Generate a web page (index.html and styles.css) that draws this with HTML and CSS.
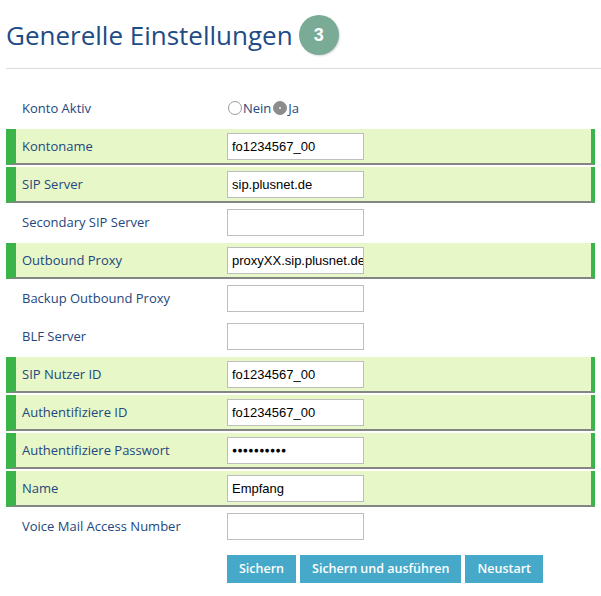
FILE: index.html
```html
<!DOCTYPE html>
<html>
<head>
<meta charset="utf-8">
<link rel="stylesheet" href="styles.css">
</head>
<body>
<div class="page">
  <h1 class="title">Generelle Einstellungen <span class="badge">3</span></h1>
  <div class="rule"></div>
  <div class="form">
    <div class="row">
      <div class="label">Konto Aktiv</div>
      <div class="field radios">
        <span class="radio"></span><span class="rtext">Nein</span>
        <span class="radio on"></span><span class="rtext">Ja</span>
      </div>
    </div>
    <div class="row hl">
      <div class="label">Kontoname</div>
      <div class="field"><div class="input">fo1234567_00</div></div>
    </div>
    <div class="row hl">
      <div class="label">SIP Server</div>
      <div class="field"><div class="input">sip.plusnet.de</div></div>
    </div>
    <div class="row">
      <div class="label">Secondary SIP Server</div>
      <div class="field"><div class="input"></div></div>
    </div>
    <div class="row hl">
      <div class="label">Outbound Proxy</div>
      <div class="field"><div class="input">proxyXX.sip.plusnet.de</div></div>
    </div>
    <div class="row">
      <div class="label">Backup Outbound Proxy</div>
      <div class="field"><div class="input"></div></div>
    </div>
    <div class="row">
      <div class="label">BLF Server</div>
      <div class="field"><div class="input"></div></div>
    </div>
    <div class="row hl">
      <div class="label">SIP Nutzer ID</div>
      <div class="field"><div class="input">fo1234567_00</div></div>
    </div>
    <div class="row hl">
      <div class="label">Authentifiziere ID</div>
      <div class="field"><div class="input">fo1234567_00</div></div>
    </div>
    <div class="row hl">
      <div class="label">Authentifiziere Passwort</div>
      <div class="field"><div class="input pw">&#9679;&#9679;&#9679;&#9679;&#9679;&#9679;&#9679;&#9679;&#9679;&#9679;</div></div>
    </div>
    <div class="row hl">
      <div class="label">Name</div>
      <div class="field"><div class="input">Empfang</div></div>
    </div>
    <div class="row">
      <div class="label">Voice Mail Access Number</div>
      <div class="field"><div class="input"></div></div>
    </div>
    <div class="buttons">
      <span class="btn">Sichern</span>
      <span class="btn">Sichern und ausführen</span>
      <span class="btn">Neustart</span>
    </div>
  </div>
</div>
</body>
</html>
```
FILE: styles.css
```css
html, body { margin: 0; padding: 0; background: #fff; }
body { font-family: "Open Sans", "Noto Sans", sans-serif; }
.page { padding: 15px 0 0 6px; }
.title {
  margin: 0;
  display: flex;
  align-items: center;
  gap: 6px;
  font-weight: normal;
  font-size: 26px;
  line-height: 40px;
  height: 40px;
  color: #214b85;
}
.badge {
  width: 40px; height: 40px; border-radius: 50%;
  background: #7aab97;
  color: #fff;
  font-size: 18px; font-weight: bold;
  display: flex; align-items: center; justify-content: center;
  box-shadow: 1px 1px 2px rgba(0,0,0,0.15);
  font-family: "Liberation Sans", sans-serif;
}
.rule { margin-top: 13px; height: 1px; background: #dcdcdc; }
.form { padding-top: 22px; width: 589px; }
.row {
  display: flex;
  align-items: center;
  height: 34px;
  margin-bottom: 4px;
  border-left: 10px solid transparent;
  border-right: 4px solid transparent;
}
.row.hl {
  background: #e7f7c8;
  border-left-color: #3bb44a;
  border-right-color: #3bb44a;
  border-bottom: 2px solid #858585;
  margin-bottom: 2px;
}
.label { width: 205px; padding-left: 6px; font-size: 13px; color: #23477e; }
.field { display: flex; align-items: center; }
.input {
  width: 130px; height: 25px;
  border: 1px solid #bdbdbd;
  background: #fff;
  padding: 0 1px 0 4px;
  font-family: "Liberation Sans", Arial, sans-serif;
  font-size: 13px; line-height: 25px; color: #000;
  white-space: nowrap; overflow: hidden;
}
.input.pw { font-size: 8.5px; letter-spacing: 0.3px; }
.radios { font-size: 13px; color: #23477e; }
.radio {
  width: 14px; height: 14px; border-radius: 50%;
  border: 1px solid #9a9a9a; background: #fff; box-sizing: border-box;
  display: inline-block; margin: 0 1px 0 1px;
}
.radio.on { background: #8c8c8c; border-color: #8c8c8c; position: relative; }
.radio.on::after {
  content: ""; position: absolute; left: 5px; top: 5px; width: 2px; height: 2px;
  border-radius: 50%; background: #eee;
}
.rtext { margin-right: 1px; }
.buttons { display: flex; gap: 4px; padding: 8px 0 0 221px; }
.btn {
  background: #46a9c9; color: #fff;
  font-size: 12.5px; font-weight: 600;
  height: 28px; line-height: 28px;
  padding: 0 12px;
}
```
